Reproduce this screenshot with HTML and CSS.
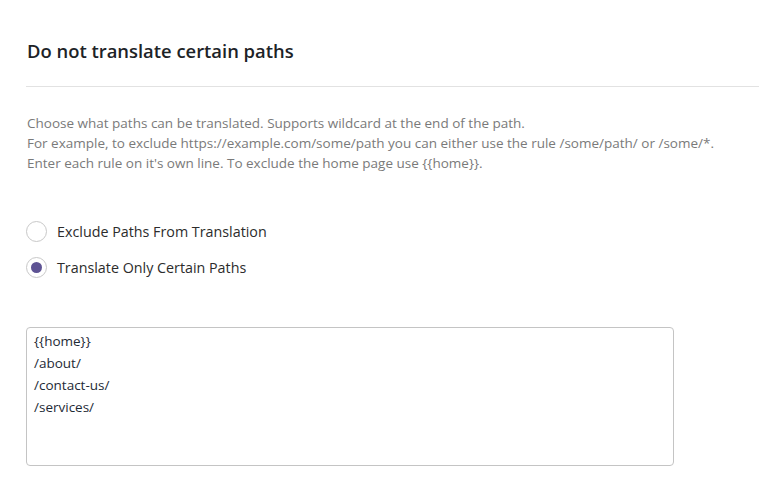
FILE: index.html
```html
<!DOCTYPE html>
<html>
<head>
<meta charset="utf-8">
<link rel="stylesheet" href="styles.css">
</head>
<body>
<div class="page">
  <header class="head">
    <h2 class="title">Do not translate certain paths</h2>
  </header>
  <div class="body">
    <p class="desc">Choose what paths can be translated. Supports wildcard at the end of the path.<br>For example, to exclude https://example.com/some/path you can either use the rule /some/path/ or /some/*.<br>Enter each rule on it's own line. To exclude the home page use {{home}}.</p>
    <div class="radios">
      <label class="radio"><span class="circle"></span><span class="lbl">Exclude Paths From Translation</span></label>
      <label class="radio"><span class="circle checked"></span><span class="lbl">Translate Only Certain Paths</span></label>
    </div>
    <div class="area">{{home}}<br>/about/<br>/contact-us/<br>/services/</div>
  </div>
</div>
</body>
</html>
```
FILE: styles.css
```css
html, body { margin: 0; padding: 0; background: #fff; }
body { font-family: "Open Sans", "Noto Sans", sans-serif; color: #1e1e1e; }
.page { padding-left: 26px; }
.head {
  height: 86px;
  border-bottom: 1px solid #e2e2e2;
  display: flex;
  align-items: flex-start;
}
.title {
  margin: 38px 0 0 1px;
  font-size: 18.4px;
  font-weight: 600;
  line-height: 26px;
  color: #1d2327;
}
.body { padding-top: 26px; }
.desc {
  margin: 0 0 0 1px;
  font-size: 13.5px;
  line-height: 20px;
  color: #7a7a7a;
}
.radios {
  margin-top: 48px;
  display: flex;
  flex-direction: column;
  gap: 16px;
}
.radio { display: flex; align-items: center; gap: 10px; height: 20px; }
.circle {
  box-sizing: border-box;
  width: 21px; height: 21px;
  border: 1px solid #c8c8c8;
  border-radius: 50%;
  display: flex; align-items: center; justify-content: center;
  background: #fff;
}
.circle.checked::after {
  content: "";
  width: 11px; height: 11px;
  border-radius: 50%;
  background: #5e5394;
}
.lbl { font-size: 14.3px; color: #2c2c2c; }
.area {
  margin-top: 50px;
  box-sizing: border-box;
  width: 648px;
  height: 139px;
  border: 1px solid #c4c4c4;
  border-radius: 4px;
  padding: 2px 7px;
  font-size: 13.5px;
  line-height: 22px;
  color: #1e2a36;
}
```
